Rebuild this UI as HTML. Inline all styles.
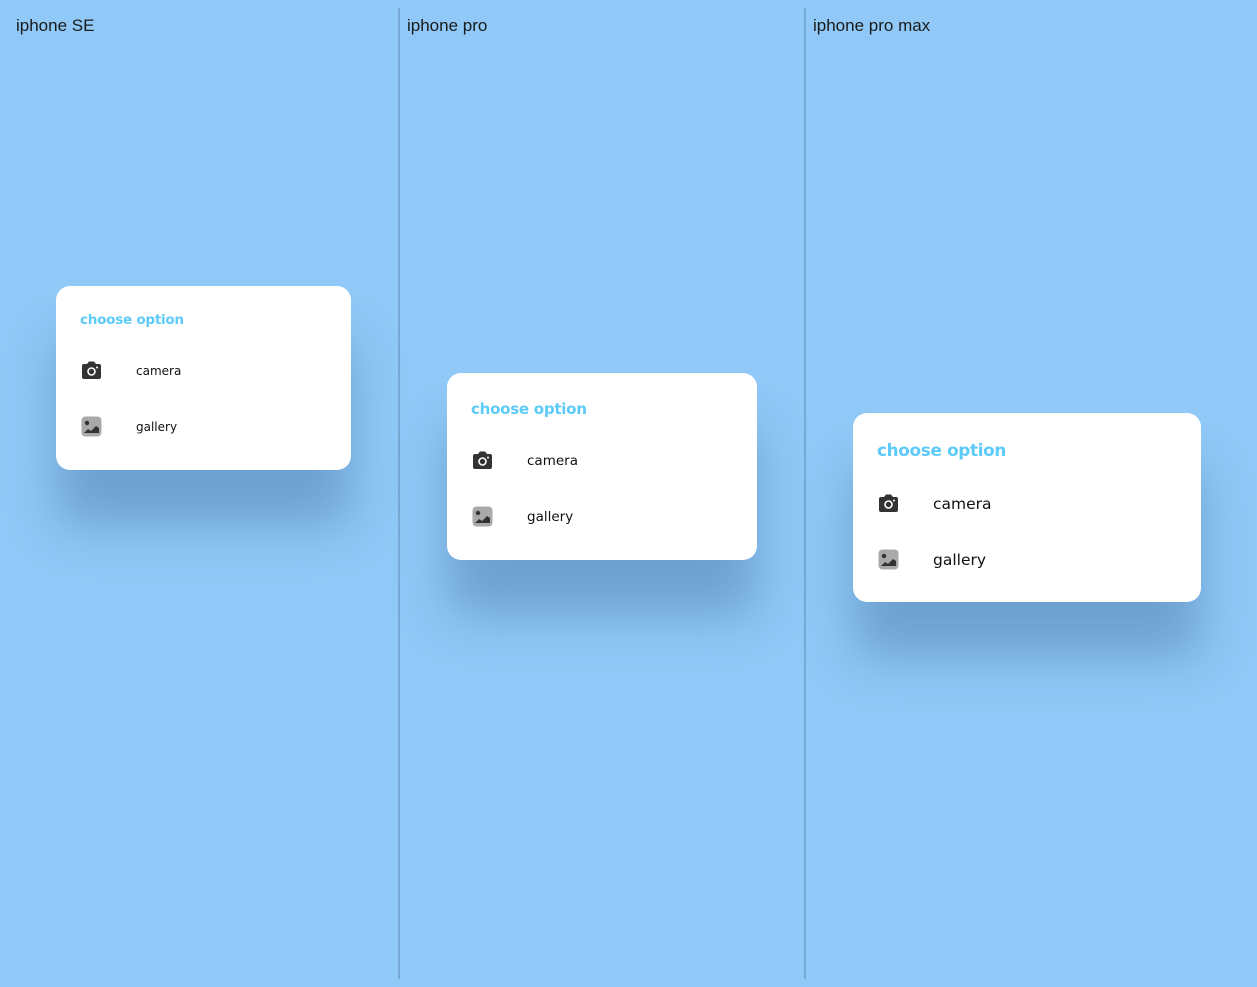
<!DOCTYPE html>
<html><head><style>
body{margin:0;width:1257px;height:987px;background:#90c9f7;position:relative;overflow:hidden;font-family:"Liberation Sans",sans-serif}
.lbl{position:absolute;top:16px;font-size:17px;color:#1a1a1a}
.div{position:absolute;top:8px;width:2px;height:971px;background:#77a9d4}
.card{position:absolute;background:#fff;border-radius:14px;box-shadow:0 55px 50px rgba(30,70,120,0.3)}
.t{position:absolute;color:#5dcbf9;font-weight:bold;font-family:"DejaVu Sans","Liberation Sans",sans-serif;letter-spacing:-0.3px}
.r{position:absolute;color:#111;font-family:"DejaVu Sans","Liberation Sans",sans-serif}
.ic{position:absolute}
</style></head><body>
<div class="lbl" style="left:16px">iphone SE</div>
<div class="lbl" style="left:407px">iphone pro</div>
<div class="lbl" style="left:813px">iphone pro max</div>
<div class="div" style="left:398px"></div>
<div class="div" style="left:804px"></div>

<div class="card" style="left:56px;top:286px;width:295px;height:184px">
<div class="t" style="left:24px;top:26px;font-size:13.6px">choose option</div>
<svg class="ic" style="left:25px;top:75px" width="21" height="19" viewBox="0 0 21 19"><path d="M6 3 L8 0.5 H13 L15 3 H18 Q20 3 20 5 V16 Q20 18 18 18 H3 Q1 18 1 16 V5 Q1 3 3 3Z" fill="#333"/><circle cx="10.5" cy="10.5" r="3.5" fill="none" stroke="#fff" stroke-width="1.6"/><circle cx="16" cy="6.5" r="1" fill="#fff"/></svg>
<div class="r" style="left:80px;top:78px;font-size:12px">camera</div>
<svg class="ic" style="left:25px;top:130px" width="21" height="21" viewBox="0 0 21 21"><rect x="0.5" y="0.5" width="20" height="20" rx="4" fill="#a9a9a9"/><circle cx="6" cy="7" r="2.2" fill="#333"/><path d="M3 17 L7 13 L10 15 L15 10 L18 12 V17Z" fill="#333"/></svg>
<div class="r" style="left:80px;top:134px;font-size:12px">gallery</div>
</div>

<div class="card" style="left:447px;top:373px;width:310px;height:187px">
<div class="t" style="left:24px;top:27px;font-size:15.1px">choose option</div>
<svg class="ic" style="left:25px;top:78px" width="21" height="19" viewBox="0 0 21 19"><path d="M6 3 L8 0.5 H13 L15 3 H18 Q20 3 20 5 V16 Q20 18 18 18 H3 Q1 18 1 16 V5 Q1 3 3 3Z" fill="#333"/><circle cx="10.5" cy="10.5" r="3.5" fill="none" stroke="#fff" stroke-width="1.6"/><circle cx="16" cy="6.5" r="1" fill="#fff"/></svg>
<div class="r" style="left:80px;top:80px;font-size:13.5px">camera</div>
<svg class="ic" style="left:25px;top:133px" width="21" height="21" viewBox="0 0 21 21"><rect x="0.5" y="0.5" width="20" height="20" rx="4" fill="#a9a9a9"/><circle cx="6" cy="7" r="2.2" fill="#333"/><path d="M3 17 L7 13 L10 15 L15 10 L18 12 V17Z" fill="#333"/></svg>
<div class="r" style="left:80px;top:136px;font-size:13.5px">gallery</div>
</div>

<div class="card" style="left:853px;top:413px;width:348px;height:189px">
<div class="t" style="left:24px;top:27px;font-size:16.8px">choose option</div>
<svg class="ic" style="left:25px;top:81px" width="21" height="19" viewBox="0 0 21 19"><path d="M6 3 L8 0.5 H13 L15 3 H18 Q20 3 20 5 V16 Q20 18 18 18 H3 Q1 18 1 16 V5 Q1 3 3 3Z" fill="#333"/><circle cx="10.5" cy="10.5" r="3.5" fill="none" stroke="#fff" stroke-width="1.6"/><circle cx="16" cy="6.5" r="1" fill="#fff"/></svg>
<div class="r" style="left:80px;top:82px;font-size:15.5px">camera</div>
<svg class="ic" style="left:25px;top:136px" width="21" height="21" viewBox="0 0 21 21"><rect x="0.5" y="0.5" width="20" height="20" rx="4" fill="#a9a9a9"/><circle cx="6" cy="7" r="2.2" fill="#333"/><path d="M3 17 L7 13 L10 15 L15 10 L18 12 V17Z" fill="#333"/></svg>
<div class="r" style="left:80px;top:138px;font-size:15.5px">gallery</div>
</div>
</body></html>
